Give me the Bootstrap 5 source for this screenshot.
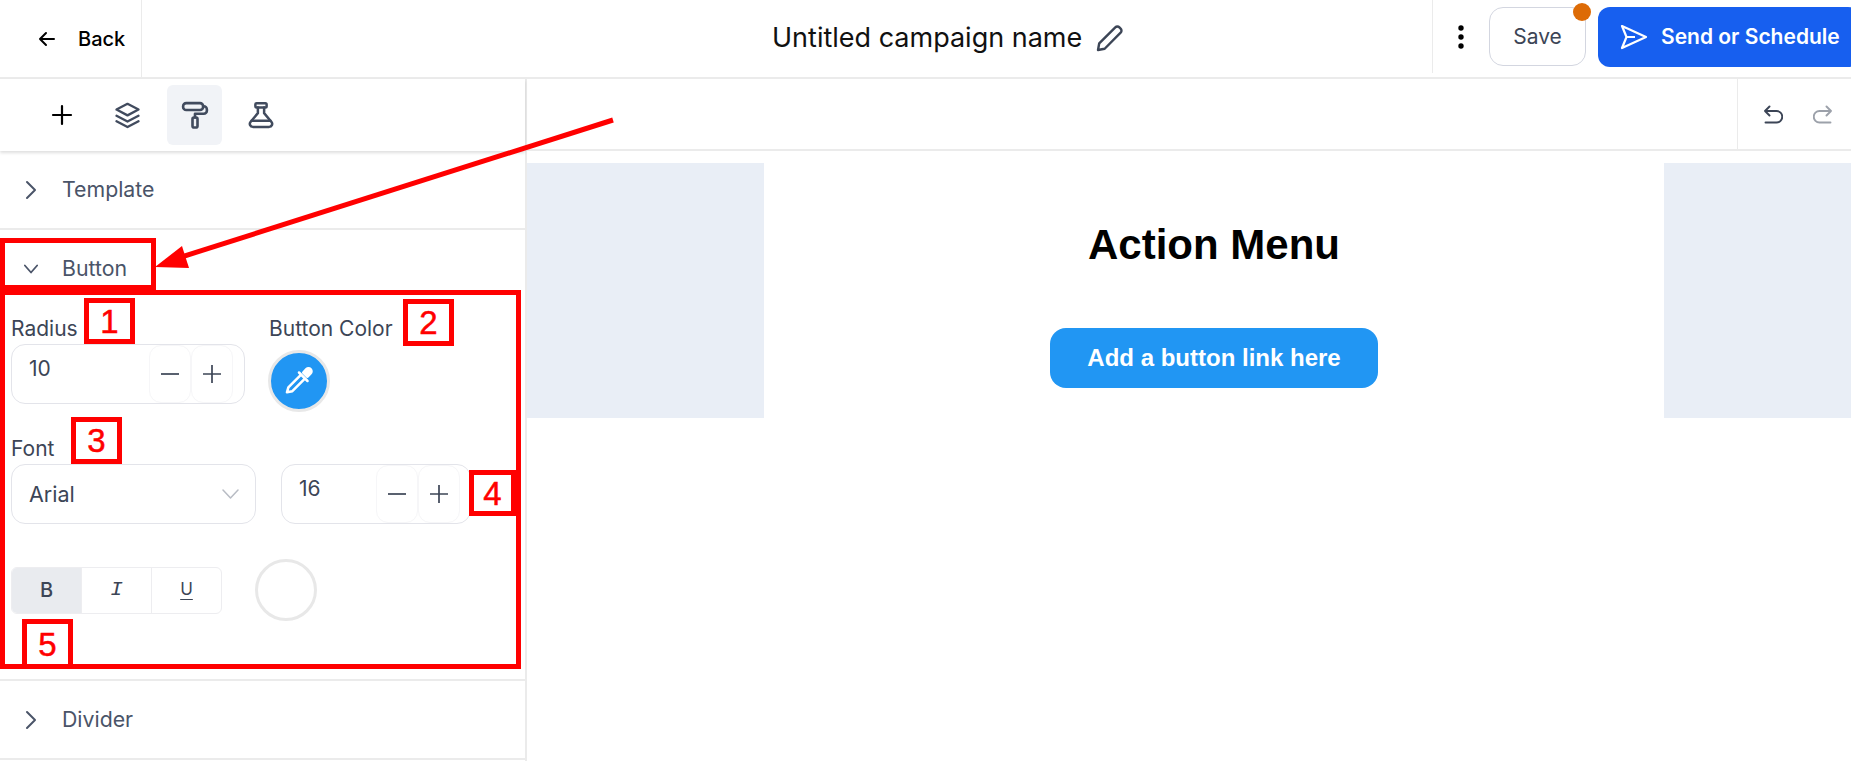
<!DOCTYPE html>
<html lang="en">
<head>
<meta charset="UTF-8">
<title>Campaign editor</title>
<link href="https://cdn.jsdelivr.net/npm/bootstrap@5.3.0/dist/css/bootstrap.min.css" rel="stylesheet">
<style>
body { margin: 0; background: #fff; font-family: "Inter", "Liberation Sans", sans-serif; color: #3c4556; overflow: hidden; }
svg { display: block; flex: none; }
.page-wrap { position: relative; width: 1851px; height: 761px; overflow: hidden; }
.top-bar { height: 79px; border-bottom: 2px solid #ebebeb; }
.back-cell { width: 142px; height: 77px; flex: none; border-right: 1px solid #ebebeb; padding-left: 37px; gap: 21px; font-size: 20px; font-weight: 500; color: #000; }
.title-cell { width: 1290px; flex: none; padding-left: 630px; gap: 13px; font-size: 27px; color: #111; white-space: nowrap; }
.action-cell { width: 419px; height: 73px; border-left: 1px solid #ebebeb; flex: none; align-items: flex-start; padding-top: 7px; }
.dots-wrap { width: 56px; height: 59px; flex: none; }
.save-btn { position: relative; flex: none; width: 97px; height: 59px; padding: 0; border: 1px solid #d3d6e0; border-radius: 14px; background: #fff; font-size: 21px; font-weight: 400; color: #3c4556; }
.save-dot { position: absolute; top: -5px; right: -6px; width: 18px; height: 18px; border-radius: 50%; background: #dd6b06; }
.send-btn { flex: none; width: 262px; height: 60px; margin-left: 12px; padding: 0 0 0 22px; gap: 13px; border: 0; border-radius: 12px; background: #175fef; color: #fff; font-size: 21px; font-weight: 600; white-space: nowrap; }
.side-panel { width: 527px; height: 682px; border-right: 2px solid #ebebeb; flex: none; }
.tool-strip { height: 72px; padding-left: 34px; gap: 11px; box-shadow: 0 2px 3px rgba(0,0,0,.13); position: relative; }
.tool-cell { width: 55px; height: 60px; border-radius: 6px; }
.tool-cell.is-active { background: #f1f3f7; margin-left: 1px; }
.sec-head { height: 78px; padding-left: 24px; gap: 24px; font-size: 21.3px; color: #4a5468; }
.sec-tall { height: 79px; }
.sec-rule { border-bottom: 2px solid #ebebeb; }
.sec-body { height: 373px; padding: 9px 0 0 11px; border-bottom: 2px solid #ebebeb; }
.field-label { height: 24px; line-height: 24px; font-size: 21px; font-weight: 400; color: #3c4556; white-space: nowrap; }
.upper-row { height: 120px; }
.radius-col { width: 258px; }
.radius-stepper { width: 234px; margin-top: 3px; padding-right: 11px !important; }
.stepper { height: 60px; border: 1px solid #e3e4ea; border-radius: 14px; padding-right: 10px; font-size: 21px; color: #3c4556; }
.stepper-val { padding: 0 0 10px 17px; flex-grow: 1; }
.step-cell { width: 42px; height: 58px; flex: none; border: 1px solid #f6f6f8; border-radius: 12px; }
.swatch { width: 62px; height: 62px; margin-top: 9px; margin-left: -1px; border-radius: 50%; border: 3px solid #e8e8e8; }
.swatch-blue { background: #2196f3; }
.swatch-white { background: #fff; }
.font-row { margin-top: 3px; }
.font-pick { width: 245px; height: 60px; flex: none; padding: 0 16px 0 17px; border: 1px solid #e3e4ea; border-radius: 14px; font-size: 21.5px; }
.size-col { width: 190px; flex: none; margin-left: 25px; }
.format-row { margin-top: 35px; gap: 33px; }
.format-group { width: 211px; height: 47px; border: 1px solid #ededf0; border-radius: 6px; overflow: hidden; }
.format-cell { flex: 1; font-size: 20px; color: #3c4556; }
.format-cell + .format-cell { border-left: 1px solid #ededf0; }
.format-cell.is-on { background: #e9ebef; }
.slab-i { font-family: "Liberation Mono", monospace; font-style: italic; font-size: 21px; }
.under-u { font-size: 17px; text-underline-offset: 4px; }
.canvas-strip { height: 72px; border-bottom: 2px solid #ebebeb; }
.history-cell { width: 114px; height: 70px; border-left: 1px solid #ebebeb; padding: 2px 0 0 25px; gap: 30px; }
.canvas-row { padding-top: 12px; }
.canvas-gutter { height: 255px; background: #e9eef6; flex: none; }
.gutter-left { width: 237px; }
.gutter-right { width: 187px; }
.mail-col { width: 900px; flex: none; padding-top: 50px; font-family: "Liberation Sans", Arial, sans-serif; }
.mail-title { font-size: 42px; font-weight: 700; line-height: 64px; color: #000; margin: 0 0 51px 0; }
.mail-btn { display: inline-block; width: 328px; height: 60px; line-height: 60px; border-radius: 16px; background: #2196f3; color: #fff; font-size: 24px; font-weight: 700; }
.note-box { position: absolute; border: 5px solid #f00; box-sizing: border-box; }
.note-num { display: flex; align-items: center; justify-content: center; color: #f00; font-family: "Liberation Sans", Arial, sans-serif; font-size: 33px; line-height: 1; background: #fff; -webkit-text-stroke: .5px #f00; }
.note-arrow { position: absolute; left: 0; top: 0; pointer-events: none; }
</style>
</head>
<body>
<div class="page-wrap">

  <div class="top-bar d-flex">
    <div class="back-cell d-flex align-items-center">
      <svg width="20" height="20" viewBox="0 0 20 20" fill="none" stroke="#000" stroke-width="2" stroke-linecap="round" stroke-linejoin="round"><path d="M17 10H3M9 4l-6 6 6 6"/></svg>
      <span>Back</span>
    </div>
    <div class="title-cell d-flex align-items-center">
      <span>Untitled campaign name</span>
      <svg width="29" height="29" viewBox="0 0 24 24" fill="none" stroke="#3c4556" stroke-width="2" stroke-linejoin="round"><path d="M2.500 21.500l1-5.500L16.800 2.800a2.400 2.400 0 0 1 3.400 0l1 1a2.400 2.400 0 0 1 0 3.400L8 20.500z"/></svg>
    </div>
    <div class="action-cell d-flex">
      <div class="dots-wrap d-flex align-items-center justify-content-center">
        <svg width="6" height="24" viewBox="0 0 6 24" fill="#000"><circle cx="3" cy="3" r="2.700"/><circle cx="3" cy="12" r="2.700"/><circle cx="3" cy="21" r="2.700"/></svg>
      </div>
      <button class="btn save-btn" type="button">Save<span class="save-dot"></span></button>
      <button class="btn send-btn d-flex align-items-center" type="button">
        <svg width="28" height="26" viewBox="0 0 28 26" fill="none" stroke="#fff" stroke-width="2.200" stroke-linejoin="round"><path d="M6.500 13L2 2l24 11L2 24zM6.500 13H15"/></svg>
        <span>Send or Schedule</span>
      </button>
    </div>
  </div>

  <div class="d-flex">
    <aside class="side-panel">
      <div class="tool-strip d-flex align-items-center">
        <div class="tool-cell d-flex align-items-center justify-content-center">
          <svg width="24" height="24" viewBox="0 0 24 24" fill="none" stroke="#000" stroke-width="2.200" stroke-linecap="round"><path d="M12 3v18M3 12h18"/></svg>
        </div>
        <div class="tool-cell d-flex align-items-center justify-content-center">
          <svg width="33" height="33" viewBox="0 0 24 24" fill="none" stroke="#414b5e" stroke-width="1.700" stroke-linecap="round" stroke-linejoin="round"><path d="M12 3.500l-8 4.200 8 4.200 8-4.200z"/><path d="M4 12.200l8 4.200 8-4.200"/><path d="M4 16.200l8 4.200 8-4.200"/></svg>
        </div>
        <div class="tool-cell is-active d-flex align-items-center justify-content-center">
          <svg width="30" height="30" viewBox="0 0 24 24" fill="none" stroke="#414b5e" stroke-width="2.100" stroke-linecap="round" stroke-linejoin="round"><rect x="2.500" y="2.500" width="16" height="5.500" rx="2.500"/><path d="M18.500 5h.5a2.500 2.500 0 0 1 2.500 2.500v1a2.500 2.500 0 0 1-2.500 2.500h-7v3"/><rect x="10" y="14" width="4" height="8" rx="1.200"/></svg>
        </div>
        <div class="tool-cell d-flex align-items-center justify-content-center">
          <svg width="30" height="30" viewBox="0 0 24 24" fill="none" stroke="#414b5e" stroke-width="2" stroke-linecap="round" stroke-linejoin="round"><rect x="7.500" y="2.500" width="9" height="3.500" rx="1"/><path d="M9.500 6v4.500L3.600 17.600A2.400 2.400 0 0 0 5.400 21.500h13.200a2.400 2.400 0 0 0 1.800-3.900L14.500 10.500V6"/><path d="M4.500 16.500h15"/></svg>
        </div>
      </div>

      <div class="sec-head sec-tall sec-rule d-flex align-items-center">
        <svg width="14" height="20" viewBox="0 0 14 20" fill="none" stroke="#4a5468" stroke-width="2" stroke-linecap="round" stroke-linejoin="round"><path d="M3 2l8 8-8 8"/></svg>
        <span>Template</span>
      </div>

      <div class="sec-head d-flex align-items-center">
        <svg width="14" height="20" viewBox="0 0 16 20" fill="none" stroke="#4a5468" stroke-width="2" stroke-linecap="round" stroke-linejoin="round"><path d="M1 6l7 8 7-8"/></svg>
        <span>Button</span>
      </div>

      <div class="sec-body">
        <div class="upper-row d-flex">
          <div class="radius-col">
            <div class="field-label">Radius</div>
            <div class="radius-stepper stepper d-flex align-items-center">
              <span class="stepper-val">10</span>
              <span class="step-cell d-flex align-items-center justify-content-center"><svg width="18" height="18" viewBox="0 0 18 18" stroke="#3c4556" stroke-width="1.700"><path d="M0 9h18"/></svg></span>
              <span class="step-cell d-flex align-items-center justify-content-center"><svg width="18" height="18" viewBox="0 0 18 18" stroke="#3c4556" stroke-width="1.700"><path d="M0 9h18M9 0v18"/></svg></span>
            </div>
          </div>
          <div>
            <div class="field-label">Button Color</div>
            <div class="swatch swatch-blue d-flex align-items-center justify-content-center">
              <svg width="34" height="34" viewBox="0 0 24 24" fill="none" stroke="#fff" stroke-width="1.800" stroke-linejoin="round"><path d="M13.500 7.500L4.500 16.500l-1 3.500 3.800-.8 9-9"/><path d="M12 6l6 6" stroke-linecap="round"/><path d="M15 6l2.200-2.400a2 2 0 0 1 3 3L18 9z" fill="#fff"/></svg>
            </div>
          </div>
        </div>

        <div class="field-label">Font</div>
        <div class="font-row d-flex">
          <div class="font-pick d-flex align-items-center justify-content-between">
            <span>Arial</span>
            <svg width="17" height="10" viewBox="0 0 17 10" fill="none" stroke="#b8bcc4" stroke-width="1.500" stroke-linecap="round" stroke-linejoin="round"><path d="M1 1l7.500 8L16 1"/></svg>
          </div>
          <div class="size-col stepper d-flex align-items-center">
            <span class="stepper-val">16</span>
            <span class="step-cell d-flex align-items-center justify-content-center"><svg width="18" height="18" viewBox="0 0 18 18" stroke="#3c4556" stroke-width="1.700"><path d="M0 9h18"/></svg></span>
            <span class="step-cell d-flex align-items-center justify-content-center"><svg width="18" height="18" viewBox="0 0 18 18" stroke="#3c4556" stroke-width="1.700"><path d="M0 9h18M9 0v18"/></svg></span>
          </div>
        </div>

        <div class="format-row d-flex align-items-center">
          <div class="format-group d-flex">
            <div class="format-cell is-on d-flex align-items-center justify-content-center fw-medium">B</div>
            <div class="format-cell d-flex align-items-center justify-content-center"><span class="slab-i">I</span></div>
            <div class="format-cell d-flex align-items-center justify-content-center"><u class="under-u">U</u></div>
          </div>
          <div class="swatch swatch-white m-0"></div>
        </div>
      </div>

      <div class="sec-head sec-tall sec-rule d-flex align-items-center">
        <svg width="14" height="20" viewBox="0 0 14 20" fill="none" stroke="#4a5468" stroke-width="2" stroke-linecap="round" stroke-linejoin="round"><path d="M3 2l8 8-8 8"/></svg>
        <span>Divider</span>
      </div>
    </aside>

    <main class="flex-grow-1">
      <div class="canvas-strip d-flex justify-content-end">
        <div class="history-cell d-flex align-items-center">
          <svg width="20" height="20" viewBox="0 0 20 20" fill="none" stroke="#3c4556" stroke-width="1.900" stroke-linecap="round" stroke-linejoin="round"><path d="M6.500 1.500L2 6l4.500 4.500M2 6h11.500a4.800 4.800 0 0 1 0 11.500H2.500"/></svg>
          <svg width="20" height="20" viewBox="0 0 20 20" fill="none" stroke="#9ca1aa" stroke-width="1.900" stroke-linecap="round" stroke-linejoin="round"><path d="M13.500 1.500L18 6l-4.500 4.500M18 6H6.500a4.800 4.800 0 0 0 0 11.500h11"/></svg>
        </div>
      </div>
      <div class="canvas-row d-flex">
        <div class="canvas-gutter gutter-left"></div>
        <div class="mail-col text-center">
          <h1 class="mail-title">Action Menu</h1>
          <a class="mail-btn text-decoration-none" href="#">Add a button link here</a>
        </div>
        <div class="canvas-gutter gutter-right"></div>
      </div>
    </main>
  </div>

  <svg class="note-arrow" width="1851" height="761" viewBox="0 0 1851 761"><line x1="613" y1="120" x2="175" y2="259" stroke="#f00" stroke-width="5"/><path d="M155 267L182 246l7 22z" fill="#f00"/></svg>
  <div class="note-box" style="left:0;top:238px;width:156px;height:52px"></div>
  <div class="note-box" style="left:0;top:290px;width:521px;height:379px"></div>
  <div class="note-box note-num" style="left:84px;top:298px;width:51px;height:46px">1</div>
  <div class="note-box note-num" style="left:403px;top:299px;width:51px;height:47px">2</div>
  <div class="note-box note-num" style="left:71px;top:417px;width:51px;height:47px">3</div>
  <div class="note-box note-num" style="left:469px;top:470px;width:47px;height:46px">4</div>
  <div class="note-box note-num" style="left:22px;top:619px;width:51px;height:50px">5</div>
</div>
<script src="https://cdn.jsdelivr.net/npm/bootstrap@5.3.0/dist/js/bootstrap.bundle.min.js"></script>
</body>
</html>
